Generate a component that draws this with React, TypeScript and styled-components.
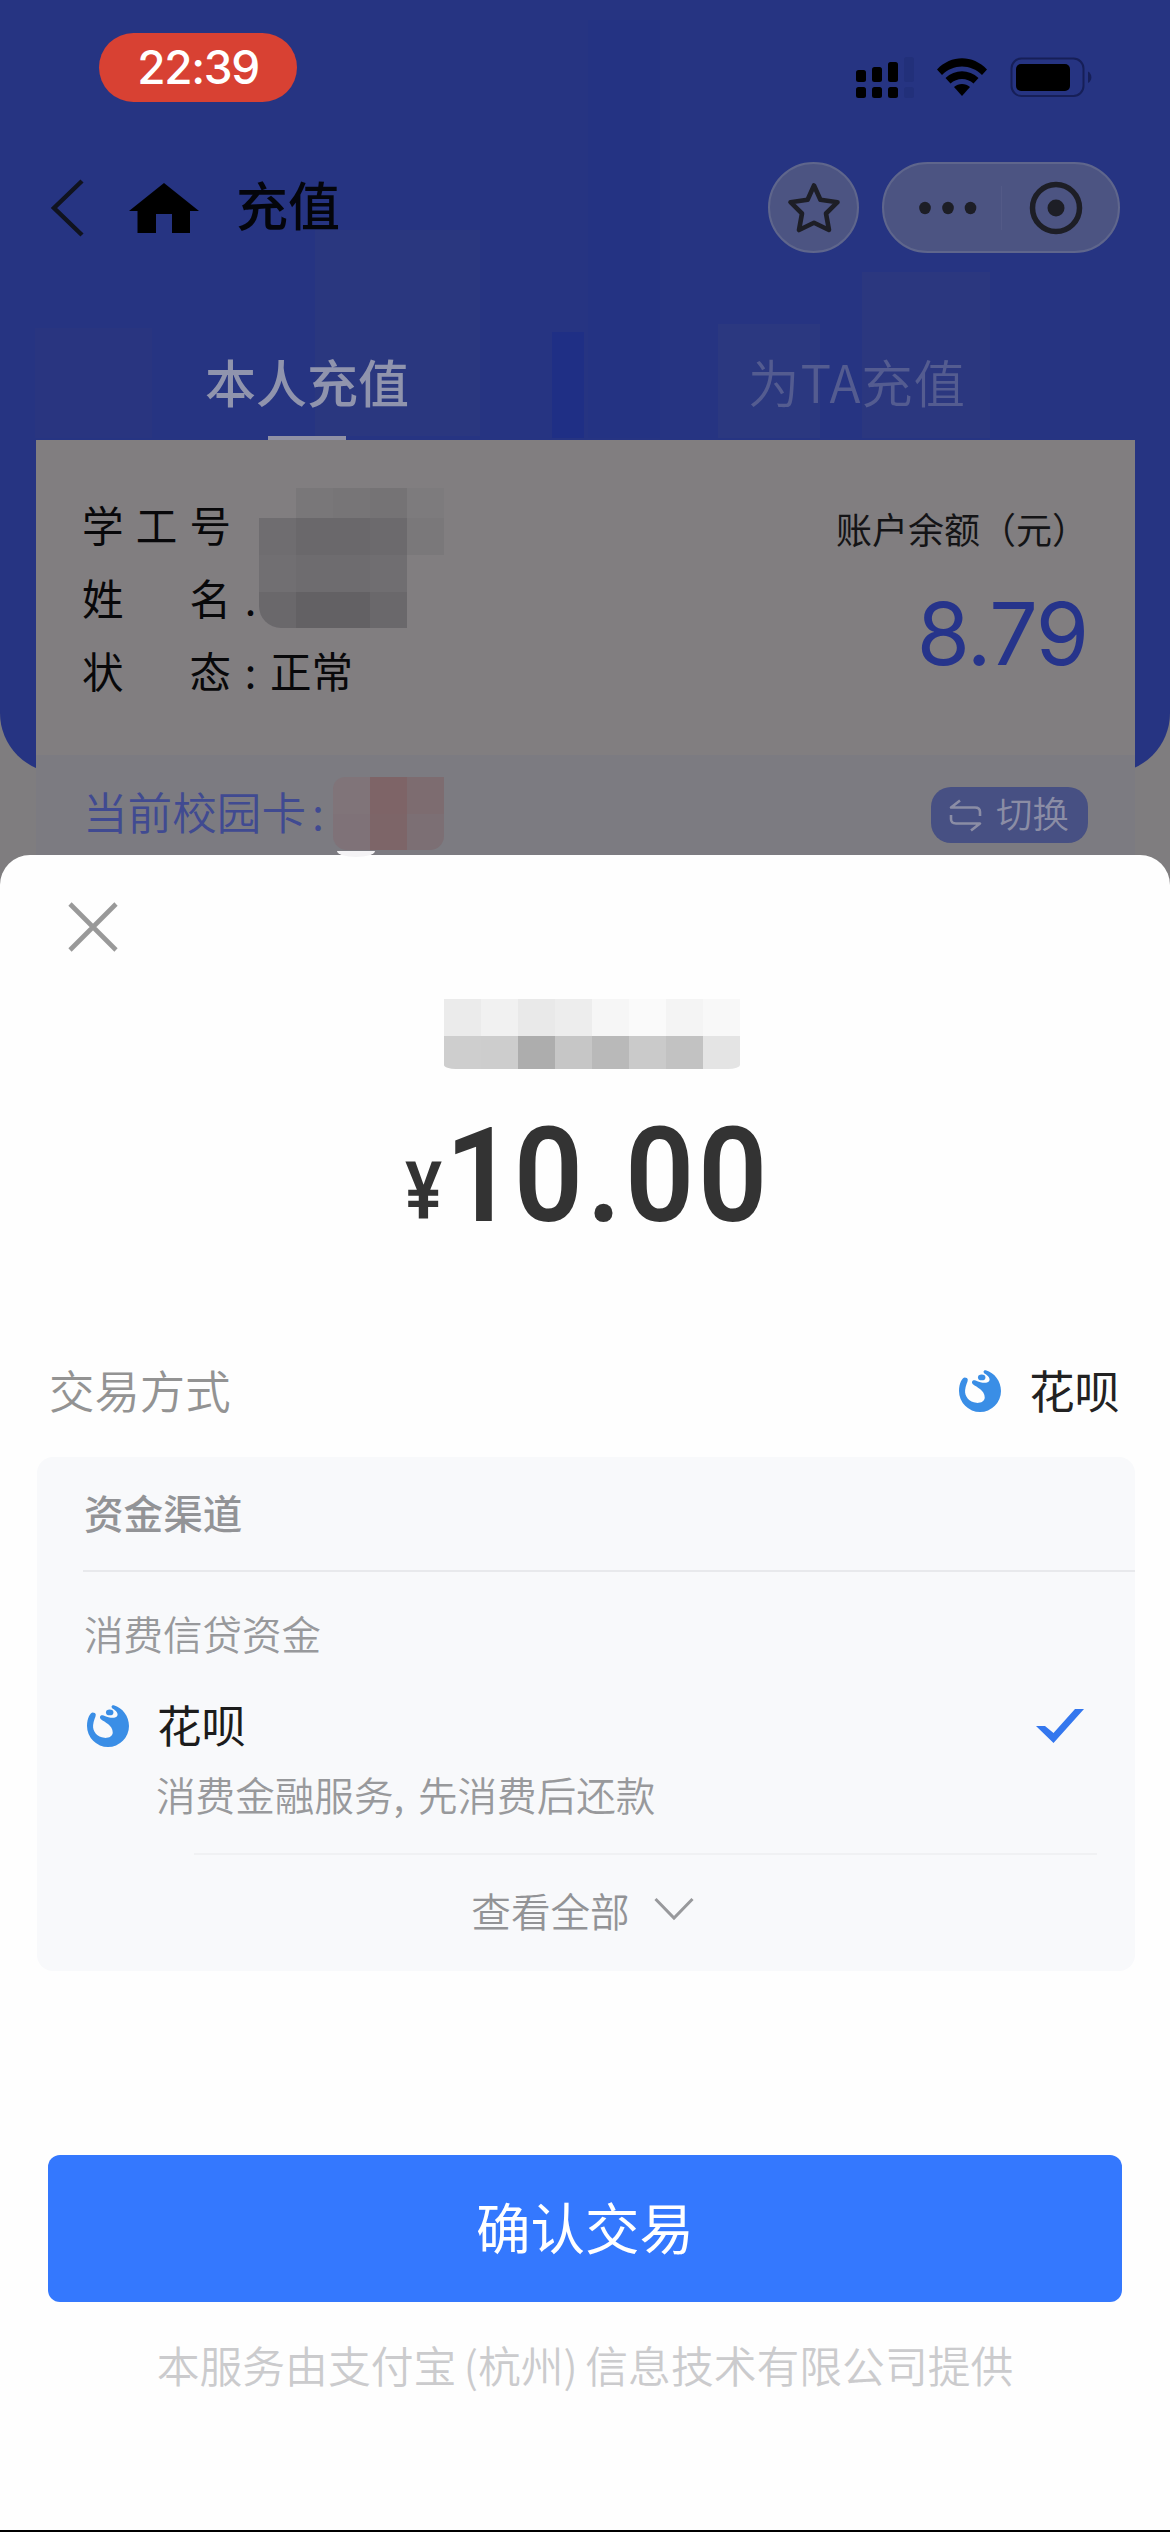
import React from 'react';
import styled, { createGlobalStyle } from 'styled-components';

const CJK = '"Noto Sans CJK SC", "Noto Sans", sans-serif';

const GlobalStyle = createGlobalStyle`
  * { box-sizing: border-box; }
  body { margin: 0; background: #000; font-family: ${CJK}; }
  svg { display: block; flex: none; }
`;

const Page = styled.div`
  width: 1170px;
  height: 2532px;
  display: flex;
  flex-direction: column;
  overflow: hidden;
  background: #7f7d7f;
  border-bottom: 2px solid #000;
`;

/* ---------- dimmed page behind the sheet ---------- */

const Hero = styled.div`
  flex: none;
  height: 773px;
  border-radius: 0 0 60px 60px;
  background:
    linear-gradient(#2a377f, #2a377f) 315px 230px / 165px 206px no-repeat,
    linear-gradient(#293580, #293580) 35px 328px / 117px 110px no-repeat,
    linear-gradient(#2b3880, #2b3880) 718px 324px / 102px 114px no-repeat,
    linear-gradient(#2b377f, #2b377f) 862px 272px / 128px 166px no-repeat,
    linear-gradient(#1f2f85, #1f2f85) 552px 332px / 32px 106px no-repeat,
    linear-gradient(#243383, #243383) 588px 20px / 72px 418px no-repeat,
    #263482;
`;

const StatusBar = styled.div`
  height: 134px;
  padding: 0 78px 0 99px;
  display: flex;
  align-items: center;
  justify-content: space-between;
`;

const TimePill = styled.div`
  width: 198px;
  height: 69px;
  border-radius: 35px;
  background: #d84133;
  color: #fff;
  font: 500 46px/69px Inter, sans-serif;
  letter-spacing: -1.4px;
  text-align: center;
`;

const StatusIcons = styled.div`
  display: flex;
  align-items: center;
  margin-top: 21px;
  gap: 23px;
`;

const NavBar = styled.div`
  height: 147px;
  padding: 0 50px 0 50px;
  display: flex;
  align-items: center;
`;

const HomeIcon = styled.svg`
  margin-left: 43px;
`;

const NavTitle = styled.div`
  flex: 1;
  margin-left: 37px;
  padding-bottom: 7px;
  font-size: 52px;
  line-height: 70px;
  font-weight: 500;
  color: #04050b;
`;

const GlassButton = styled.div<{ $width: number }>`
  width: ${(p) => p.$width}px;
  height: 91px;
  border-radius: 46px;
  border: 2px solid #5f668c;
  background: #4c5482;
  display: flex;
  align-items: center;
  justify-content: center;
`;

const Capsule = styled(GlassButton)`
  margin-left: 23px;
  justify-content: flex-start;
  padding-left: 35px;
`;

const CapsuleDivider = styled.div`
  width: 1px;
  height: 44px;
  margin: 0 27px 0 24px;
  background: #535a87;
`;

const Tabs = styled.div`
  height: 159px;
  padding: 0 38px 0 32px;
  display: flex;
`;

const Tab = styled.div<{ $active?: boolean }>`
  flex: 1;
  display: flex;
  flex-direction: column;
  align-items: center;
  padding-top: 68px;
  font-size: ${(p) => (p.$active ? 51 : 51.5)}px;
  line-height: 64px;
  letter-spacing: ${(p) => (p.$active ? 0 : 0.8)}px;
  font-weight: ${(p) => (p.$active ? 500 : 350)};
  color: ${(p) => (p.$active ? '#9094ad' : '#545c90')};
`;

const TabMark = styled.div`
  width: 78px;
  height: 4px;
  margin-top: auto;
  background: #9091a5;
`;

const Card = styled.div`
  position: relative;
  margin: 0 35px 0 36px;
`;

const CardTop = styled.div`
  height: 315px;
  padding: 0 47px 0 46px;
  display: flex;
  justify-content: space-between;
  background: #817e80;
`;

const InfoList = styled.div`
  padding-top: 47px;
`;

const InfoRow = styled.div`
  height: 73px;
  display: flex;
  align-items: center;
  font-size: 41.5px;
  font-weight: 400;
  color: #08080a;
`;

const InfoLabel = styled.div`
  width: 149px;
  display: flex;
  justify-content: space-between;
`;

const InfoColon = styled.span`
  width: 39px;
  text-align: center;
`;

const Balance = styled.div`
  padding-top: 63px;
  display: flex;
  flex-direction: column;
  align-items: flex-end;
`;

const BalanceLabel = styled.div`
  font-size: 36px;
  line-height: 50px;
  color: #141416;
`;

const BalanceValue = styled.div`
  margin: 31px 0 0 0;
  font: 400 86px/100px Inter, sans-serif;
  letter-spacing: -1.2px;
  color: #26348b;
`;

const CardStrip = styled.div`
  height: 112px;
  padding: 0 47px 0 47px;
  display: flex;
  align-items: center;
  justify-content: space-between;
  background: #7c7b81;
`;

const CampusLabel = styled.div`
  font-size: 44.6px;
  line-height: 60px;
  font-weight: 350;
  color: #404a91;
`;

const CampusColon = styled.span`
  margin-left: 6px;
`;

const SwitchButton = styled.div`
  width: 157px;
  height: 56px;
  margin-top: 8px;
  padding: 0 0 0 18px;
  border-radius: 20px;
  background: #475083;
  display: flex;
  align-items: center;
  gap: 14px;
  font-size: 36.5px;
  line-height: 50px;
  font-weight: 350;
  color: #8b8da5;
`;

const SwitchText = styled.span`
  padding-bottom: 5px;
`;

/* ---------- pixelated privacy patches ---------- */

const Mosaic = styled.div<{ $cols: number; $rows: string }>`
  display: grid;
  grid-template-columns: repeat(${(p) => p.$cols}, 37px);
  grid-template-rows: ${(p) => p.$rows};
  overflow: hidden;
`;

const Cell = styled.div<{ $color: string }>`
  background: ${(p) => p.$color};
`;

const IdMosaic = styled(Mosaic)`
  position: absolute;
  left: 223px;
  top: 48px;
  border-bottom-left-radius: 22px;
`;

const CardMosaic = styled(Mosaic)`
  position: absolute;
  left: 297px;
  top: 337px;
  border-radius: 12px 0 14px 14px;
`;

const AmountMosaic = styled(Mosaic)`
  margin: 47px 0 0 444px;
  width: 296px;
  border-radius: 0 0 12px 12px / 0 0 4px 4px;
`;

/* ---------- payment sheet ---------- */

const Sheet = styled.div`
  position: relative;
  flex: 1;
  margin-top: 82px;
  border-radius: 30px 30px 0 0;
  background: #fefefe;
  display: flex;
  flex-direction: column;
`;

const SheetNotch = styled.div`
  position: absolute;
  left: 337px;
  top: -4px;
  width: 38px;
  height: 6px;
  border-radius: 0 0 19px 19px / 0 0 6px 6px;
  background: #f4f3f5;
`;

const CloseRow = styled.div`
  padding: 47px 0 0 68px;
`;

const Amount = styled.div`
  height: 140px;
  margin-top: 37px;
  padding-right: 399px;
  display: flex;
  align-items: baseline;
  justify-content: flex-end;
  color: #333;
  font-family: Roboto, sans-serif;
  font-weight: 600;
  line-height: 140px;
`;

const Currency = styled.span`
  display: inline-block;
  margin-right: -30px;
  font-size: 79px;
  transform: translateY(-3px) scaleX(0.88);
  transform-origin: right;
`;

const AmountValue = styled.span`
  display: inline-block;
  font-size: 132px;
  letter-spacing: 4px;
  transform: scaleX(0.92);
  transform-origin: right;
`;

const AmountLead = styled.span`
  letter-spacing: -1px;
  margin-left: 5px;
`;

const MethodRow = styled.div`
  height: 90px;
  margin-top: 98px;
  padding: 0 50px 0 49px;
  display: flex;
  align-items: center;
  justify-content: space-between;
  font-size: 45.4px;
  line-height: 60px;
`;

const MethodLabel = styled.div`
  font-weight: 350;
  color: #939393;
`;

const MethodValue = styled.div`
  display: flex;
  align-items: center;
  gap: 28px;
  color: #222;

  svg {
    margin-top: 3px;
  }
`;

const Panel = styled.div`
  height: 514px;
  margin: 23px 35px 0 37px;
  border-radius: 16px;
  background: #f8f9fb;
  display: flex;
  flex-direction: column;
`;

const PanelTitle = styled.div`
  height: 115px;
  margin-left: 46px;
  padding-left: 1px;
  border-bottom: 2px solid #e8e9ec;
  font-size: 39.6px;
  line-height: 110px;
  font-weight: 500;
  color: #929396;
`;

const PanelSubtitle = styled.div`
  margin: 31px 0 0 47px;
  font-size: 39.5px;
  line-height: 60px;
  font-weight: 350;
  color: #98999c;
`;

const OptionRow = styled.div`
  height: 60px;
  margin: 33px 51px 0 50px;
  display: flex;
  align-items: center;
  font-size: 44.5px;
  line-height: 60px;
  color: #1c1c1c;
`;

const OptionName = styled.div`
  flex: 1;
  margin-left: 28px;
  padding-bottom: 4px;
`;

const OptionNote = styled.div`
  margin: 8px 0 0 119px;
  font-size: 39.6px;
  line-height: 60px;
  font-weight: 350;
  word-spacing: 5px;
  color: #98999c;
`;

const OptionDivider = styled.div`
  height: 2px;
  margin: 29px 38px 0 157px;
  background: #f0f1f3;
`;

const ViewAll = styled.div`
  flex: 1;
  padding: 0 7px 8px 0;
  display: flex;
  align-items: center;
  justify-content: center;
  gap: 24px;
  font-size: 39.6px;
  font-weight: 350;
  color: #929396;
`;

const ConfirmButton = styled.div`
  height: 147px;
  margin: 184px 48px 0 48px;
  padding-bottom: 6px;
  border-radius: 12px;
  background: #3478fe;
  display: flex;
  align-items: center;
  justify-content: center;
  font-size: 54.5px;
  color: #fff;
`;

const Footer = styled.div`
  margin-top: 32px;
  font-size: 42.8px;
  line-height: 60px;
  font-weight: 350;
  word-spacing: -2px;
  text-align: center;
  color: #cbcbcd;
`;

const HuabeiIcon = () => (
  <svg width="42" height="42" viewBox="25 24 124 124">
    <path
      fill="#3a8ee6"
      d="M42 46C35 46 25 62 25 86A62 62 0 0 0 149 86C149 58 130 32 104 25C98 24 95 30 100 34C111 40 120 50 113 58C106 65 90 62 74 55C65 52 60 60 66 66C78 75 101 84 101 105C101 116 89 122 76 121C56 119 41 103 43 84C44 70 51 60 51 53C51 48 46 46 42 46Z"
    />
    <ellipse cx="92" cy="46" rx="11" ry="8.5" fill="#3a8ee6" />
  </svg>
);

const Cells = ({ colors }: { colors: string[] }) => (
  <>
    {colors.map((c, i) => (
      <Cell key={i} $color={c} />
    ))}
  </>
);

const idCells = [
  'transparent', '#797779', '#777577', '#757375', '#7d7b7d',
  '#6f6d70', '#6a686b', '#6a686b', '#6c6a6d', '#7a787a',
  '#716f72', '#6e6c6f', '#6e6c6f', '#706e71', 'transparent',
  '#6a686b', '#636164', '#636164', '#6a686b', 'transparent',
];
const cardCells = ['#807479', '#7e6467', '#7d6c70', '#7f7278', '#7d6568', '#7c6f74'];
const amountCells = [
  '#ebebeb', '#f1f1f1', '#e9e9e9', '#ededed', '#f6f6f6', '#fafafa', '#f4f4f4', '#f8f8f8',
  '#cecece', '#cdcdcd', '#adadad', '#c6c6c6', '#b9b9b9', '#cacaca', '#c2c2c2', '#e4e4e4',
];

const bars = [
  { x: 0, y: 13, h: 12, on: true },
  { x: 16, y: 10, h: 15, on: true },
  { x: 32, y: 5, h: 20, on: true },
  { x: 48, y: 0, h: 25, on: false },
];

export default function App() {
  return (
    <Page>
      <GlobalStyle />
      <Hero>
        <StatusBar>
          <TimePill>22:39</TimePill>
          <StatusIcons>
            <svg width="58" height="41" viewBox="0 0 58 41">
              {bars.map((b) => (
                <g key={b.x} fill={b.on ? '#000' : '#22307a'}>
                  <rect x={b.x} y={b.y} width="10" height={b.h} rx="2.5" />
                  <rect x={b.x} y="30" width="10" height="11" rx="2.5" />
                </g>
              ))}
            </svg>
            <svg width="50" height="39" viewBox="0 0 50 39">
              <path d="M0 11.5C14 -3.5 36 -3.5 50 11.5L45 17C34 5.500 16 5.500 5 17Z" />
              <path d="M8.500 20C18 11 32 11 41.500 20L36.500 25.500C30 19.500 20 19.500 13.500 25.500Z" />
              <path d="M17 29C21.500 25 28.500 25 33 29L25 38Z" strokeLinejoin="round" />
            </svg>
            <svg width="82" height="41" viewBox="0 0 82 41">
              <rect x="1.500" y="1.500" width="72" height="37.500" rx="10" fill="none" stroke="#161f58" strokeWidth="2" />
              <rect x="6" y="7" width="54" height="27" rx="5" />
              <path d="M78 14.500C82.500 17 82.500 23.500 78 26Z" fill="#161f58" />
            </svg>
          </StatusIcons>
        </StatusBar>

        <NavBar>
          <svg width="36" height="58" viewBox="0 0 36 58">
            <path d="M32 2L4 29L32 56" fill="none" stroke="#10131f" strokeWidth="4.500" />
          </svg>
          <HomeIcon width="70" height="50" viewBox="0 0 70 50">
            <path d="M35 0L70 28H61V50H43V31H27V50H8.500V28H0Z" fill="#000" />
          </HomeIcon>
          <NavTitle>充值</NavTitle>
          <GlassButton $width={91}>
            <svg width="54" height="54" viewBox="0 0 54 54">
              <path
                d="M27 4.500L33.400 18.800L50.500 21.200L39 32.500L42 49L27 41.700L12 49L15 32.500L3.500 21.200L20.600 18.800Z"
                fill="none"
                stroke="#1d1e26"
                strokeWidth="4.600"
                strokeLinejoin="round"
              />
            </svg>
          </GlassButton>
          <Capsule $width={238}>
            <svg width="58" height="14" viewBox="0 0 58 14">
              {[6, 29, 51.5].map((x) => (
                <ellipse key={x} cx={x} cy="7" rx="5.800" ry="6.200" fill="#1d1e26" />
              ))}
            </svg>
            <CapsuleDivider />
            <svg width="54" height="54" viewBox="0 0 54 54">
              <circle cx="27" cy="27" r="23.500" fill="none" stroke="#1d1e26" strokeWidth="5.500" />
              <circle cx="27" cy="27" r="8.500" fill="#1d1e26" />
            </svg>
          </Capsule>
        </NavBar>

        <Tabs>
          <Tab $active>
            本人充值
            <TabMark />
          </Tab>
          <Tab>为TA充值</Tab>
        </Tabs>

        <Card>
          <CardTop>
            <InfoList>
              <InfoRow>
                <InfoLabel>
                  <span>学</span>
                  <span>工</span>
                  <span>号</span>
                </InfoLabel>
              </InfoRow>
              <InfoRow>
                <InfoLabel>
                  <span>姓</span>
                  <span>名</span>
                </InfoLabel>
                <InfoColon>.</InfoColon>
              </InfoRow>
              <InfoRow>
                <InfoLabel>
                  <span>状</span>
                  <span>态</span>
                </InfoLabel>
                <InfoColon>:</InfoColon>
                <span>正常</span>
              </InfoRow>
            </InfoList>
            <Balance>
              <BalanceLabel>账户余额（元）</BalanceLabel>
              <BalanceValue>8.79</BalanceValue>
            </Balance>
          </CardTop>
          <CardStrip>
            <CampusLabel>
              当前校园卡<CampusColon>:</CampusColon>
            </CampusLabel>
            <SwitchButton>
              <svg width="33" height="33" viewBox="0 0 33 33" fill="none" stroke="#8b8da5" strokeWidth="2.600">
                <path d="M11 1.500L2 8.500H26Q31 8.500 31 13V17" strokeLinejoin="round" />
                <path d="M22 31.500L31 24.500H7Q2 24.500 2 20V16" strokeLinejoin="round" />
              </svg>
              <SwitchText>切换</SwitchText>
            </SwitchButton>
          </CardStrip>
          <IdMosaic $cols={5} $rows="30px 37px 37px 36px">
            <Cells colors={idCells} />
          </IdMosaic>
          <CardMosaic $cols={3} $rows="37px 36px">
            <Cells colors={cardCells} />
          </CardMosaic>
        </Card>
      </Hero>

      <Sheet>
        <SheetNotch />
        <CloseRow>
          <svg width="50" height="50" viewBox="0 0 50 50">
            <path d="M2 2L48 48M48 2L2 48" stroke="#999" strokeWidth="4.600" />
          </svg>
        </CloseRow>
        <AmountMosaic $cols={8} $rows="37px 33px">
          <Cells colors={amountCells} />
        </AmountMosaic>
        <Amount>
          <Currency>¥</Currency>
          <AmountValue>
            <AmountLead>1</AmountLead>0.00
          </AmountValue>
        </Amount>
        <MethodRow>
          <MethodLabel>交易方式</MethodLabel>
          <MethodValue>
            <HuabeiIcon />
            花呗
          </MethodValue>
        </MethodRow>
        <Panel>
          <PanelTitle>资金渠道</PanelTitle>
          <PanelSubtitle>消费信贷资金</PanelSubtitle>
          <OptionRow>
            <HuabeiIcon />
            <OptionName>花呗</OptionName>
            <svg width="48" height="34" viewBox="0 0 48 34">
              <path d="M0 17H9L17.500 24L39 0H48L17.500 34Z" fill="#3477ee" />
            </svg>
          </OptionRow>
          <OptionNote>消费金融服务, 先消费后还款</OptionNote>
          <OptionDivider />
          <ViewAll>
            查看全部
            <svg width="40" height="24" viewBox="0 0 40 24">
              <path d="M1.500 2L20 21L38.500 2" fill="none" stroke="#98999c" strokeWidth="3" />
            </svg>
          </ViewAll>
        </Panel>
        <ConfirmButton>确认交易</ConfirmButton>
        <Footer>本服务由支付宝 (杭州) 信息技术有限公司提供</Footer>
      </Sheet>
    </Page>
  );
}
